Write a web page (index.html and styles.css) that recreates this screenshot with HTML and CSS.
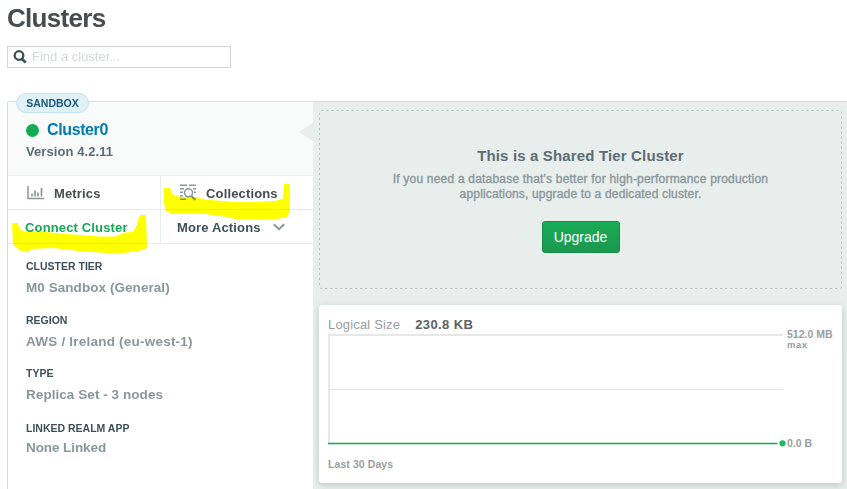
FILE: index.html
```
<!DOCTYPE html>
<html lang="en">
<head>
<meta charset="utf-8">
<title>Clusters</title>
<link rel="stylesheet" href="styles.css">
</head>
<body>
<main class="page">
  <h1><span>Clusters</span></h1>
  <label class="search">
    <svg width="15" height="15" viewBox="0 0 15 15"><circle cx="6" cy="5.500" r="4.300" fill="none" stroke="#3d4f58" stroke-width="2.300"/><path d="M9 9 12.700 12.600" stroke="#3d4f58" stroke-width="2.800"/></svg>
    <span>Find a cluster...</span>
  </label>
  <section class="cluster">
    <div class="side">
      <span class="badge"><span>SANDBOX</span></span>
      <header class="head">
        <div class="name"><i class="dot"></i><span>Cluster0</span></div>
        <div class="version"><span>Version 4.2.11</span></div>
      </header>
      <nav class="actions">
        <a class="metrics">
          <svg width="17" height="14" viewBox="0 0 17 14" fill="none" stroke="#89979b"><path d="M1 0v12.500h16" stroke-width="1.500"/><path d="M5 7.500v3M8 4.500v6M11 6.500v4M14.500 2v8.500" stroke-width="1.700"/></svg>
          <span>Metrics</span>
        </a>
        <a class="collections">
          <svg width="18" height="17" viewBox="0 0 18 17" fill="none" stroke="#89979b" stroke-width="1.500"><path d="M1 1.200h7M10 1.200h7M1 4.700h4M14 4.700h3M1 8.200h3M1 11.700h3M1 15.200h6M15 8.200h2"/><circle cx="9.500" cy="8.800" r="4"/><path d="m12.400 11.800 4 4.200" stroke-width="2"/></svg>
          <span>Collections</span>
        </a>
        <a class="connect"><span>Connect Cluster</span></a>
        <a class="more"><span>More Actions</span>
          <svg width="13" height="8" viewBox="0 0 13 8"><path d="m.8 1.300 5.200 5 5.200-5" fill="none" stroke="#89979b" stroke-width="1.900"/></svg>
        </a>
      </nav>
      <dl class="facts">
        <dt><span>CLUSTER TIER</span></dt><dd class="tier"><span>M0 Sandbox (General)</span></dd>
        <dt><span>REGION</span></dt><dd class="region"><span>AWS / Ireland (eu-west-1)</span></dd>
        <dt><span>TYPE</span></dt><dd class="type"><span>Replica Set - 3 nodes</span></dd>
        <dt><span>LINKED REALM APP</span></dt><dd class="realm"><span>None Linked</span></dd>
      </dl>
      <svg class="marker" width="305" height="160" viewBox="8 100 305 160" fill="#ff0">
        <path d="M12 223h5.500l2.500 6 5 3h20l22 2 33 2.500h15l10-4 8-.5 4-7 1-5 2-5h6l1 33-8 3-16 2h-15l-18-1-11-1-26-3-22 1-1 2h-9l-8-6z"/>
        <path d="M164 188h6l2 6 8 3h15l10 2.500 30 2.500h20l20-1 8-2.500 1-14.500h6v19l-1 10-2 4-10 2h-42l-8-2-22-3h-33l-6-3-2-8z"/>
      </svg>
    </div>
    <div class="main">
      <svg class="notch" width="15" height="20" viewBox="0 0 15 20"><path d="M15 0v20L0 10z" fill="#e7eeec"/></svg>
      <section class="upsell">
        <svg class="dashes" width="524" height="180"><rect x=".5" y=".5" width="522" height="178" rx="2" fill="none" stroke="#b4bdbb" stroke-dasharray="2 3"/></svg>
        <h2><span>This is a Shared Tier Cluster</span></h2>
        <p><span class="wide">If you need a database that's better for high-performance production</span><br><span>applications, upgrade to a dedicated cluster.</span></p>
        <button><span>Upgrade</span></button>
      </section>
      <section class="chart">
        <div class="metric"><span class="label">Logical Size</span><b>230.8 KB</b></div>
        <div class="plot">
          <svg width="460" height="116" viewBox="328 333 460 116"><path d="M329 444V335H783" fill="none" stroke="#e7e7e7" stroke-width="2"/><path d="M330 389.500h453" stroke="#e7e7e7"/><path d="M328 443.500h449.500" stroke="#13aa52" stroke-opacity=".25" stroke-width="3"/><path d="M328 443.500h449.500" stroke="#13aa52"/><circle cx="782.500" cy="443.300" r="3.100" fill="#19b95d"/></svg>
          <div class="scale"><div class="value">512.0 MB</div><div class="limit">max</div><div class="min">0.0 B</div></div>
        </div>
        <div class="period"><span>Last 30 Days</span></div>
      </section>
    </div>
  </section>
</main>
</body>
</html>
```
FILE: styles.css
```
* { box-sizing: border-box; }
html, body { margin: 0; overflow: hidden; }
body { background: #fff; font-family: "Liberation Sans", Arial, sans-serif; font-weight: 700; color: #3d4f58; white-space: nowrap; }
.page { height: 489px; padding-left: 7px; overflow: hidden; }
svg { display: block; flex: none; }
h1 { margin: 0; height: 46px; padding-top: 3px; font-size: 26px; line-height: 30px; letter-spacing: -.7px; color: #464c4f; }
.search { display: flex; width: 224px; height: 22px; border: 1px solid #d2d6d6; padding: 3px 0 0 5px; gap: 4px; font-size: 13px; line-height: 14px; font-weight: 400; color: #d5d8da; }
.cluster { display: grid; grid-template-columns: 306px 534px; margin-top: 33px; height: 388px; }
.side { position: relative; border: 1px solid #d5dbdb; border-width: 1px 0 0 1px; border-radius: 3px 0 0; }
.badge { position: absolute; left: 8px; top: -9px; width: 73px; height: 20px; border: 1px solid #c5e4f2; border-radius: 10px; background: #e1f2f6; font-size: 10.5px; line-height: 19px; text-align: center; color: #1a567e; }
.head { height: 74px; background: #f9fbfa; border-bottom: 1px solid #e7eeec; padding: 18px 0 0 18px; }
.name { display: flex; align-items: center; height: 20px; gap: 8px; font-size: 16px; line-height: 20px; letter-spacing: -.38px; color: #007cad; }
.dot { width: 13px; height: 13px; border-radius: 50%; background: #13aa52; }
.version { margin-top: 3px; font-size: 13px; line-height: 18px; letter-spacing: .08px; color: #5d6c74; }
.actions { display: grid; grid-template: 34px 34px / 153px 152px; font-size: 13px; letter-spacing: .15px; }
.actions a { display: flex; align-items: center; border-bottom: 1px solid #e7eeec; }
.actions span { padding-top: 2px; }
.metrics, .connect { border-right: 1px solid #e7eeec; }
.metrics { padding-left: 19px; gap: 10px; color: #464c4f; }
.collections { padding-left: 18px; gap: 9px; color: #464c4f; }
.connect { padding-left: 17px; color: #13aa52; }
.more { padding-left: 16px; gap: 12px; }
.facts { margin: 0; padding: 14px 0 0 18px; }
dt { height: 16px; font-size: 10.5px; line-height: 16px; }
dd { margin: 5px 0 15px; height: 18px; font-size: 13.5px; line-height: 18px; color: #89979b; letter-spacing: .06px; }
.region { margin-bottom: 14px; letter-spacing: .22px; }
.type { margin-bottom: 16px; }
.realm { margin-top: 3px; letter-spacing: -.08px; }
.marker { position: absolute; left: 0; top: -2px; mix-blend-mode: multiply; }
.main { position: relative; background: #e7eeec; border-top: 1px solid #d5dddc; padding: 8px 0 0 6px; }
.notch { position: absolute; left: -14px; top: 20px; }
.upsell { position: relative; width: 523px; height: 180px; text-align: center; padding-top: 36px; }
.dashes { position: absolute; left: 0; top: 0; }
h2 { margin: 0; font-size: 15px; line-height: 20px; color: #5d6c74; letter-spacing: .15px; }
p { margin: 6px 0 0; font-size: 12px; line-height: 15px; font-weight: 400; color: #89979b; letter-spacing: .17px; -webkit-text-stroke: .35px #89979b; }
.wide { letter-spacing: .2px; }
button { display: block; width: 78px; height: 32px; margin: 19px auto 0; padding: 0; border: 1px solid #138a45; border-radius: 3px; background: linear-gradient(#18ab54, #1c9850); color: #fff; font: 400 14px/28px "Liberation Sans", sans-serif; }
.chart { width: 523px; height: 178px; margin-top: 15px; background: #fff; border-radius: 3px; box-shadow: 0 2px 7px rgba(0, 30, 20, .18); padding: 11px 0 0 9px; }
.metric { display: flex; height: 17px; gap: 15px; font-size: 13px; line-height: 17px; color: #5c6163; }
.metric b { letter-spacing: .4px; }
.label { font-weight: 400; letter-spacing: .17px; color: #9b9e9f; }
.plot { display: flex; }
.scale { margin: -4px 0 0 -1px; color: #9b9e9f; }
.value { height: 11px; font-size: 10.5px; line-height: 11px; }
.limit { height: 9px; font-size: 9.5px; line-height: 9px; letter-spacing: .5px; }
.min { margin-top: 88px; font-size: 10.5px; line-height: 12px; }
.period { font-size: 10.5px; line-height: 16px; margin-top: 7px; color: #9b9e9f; letter-spacing: .08px; }
```
